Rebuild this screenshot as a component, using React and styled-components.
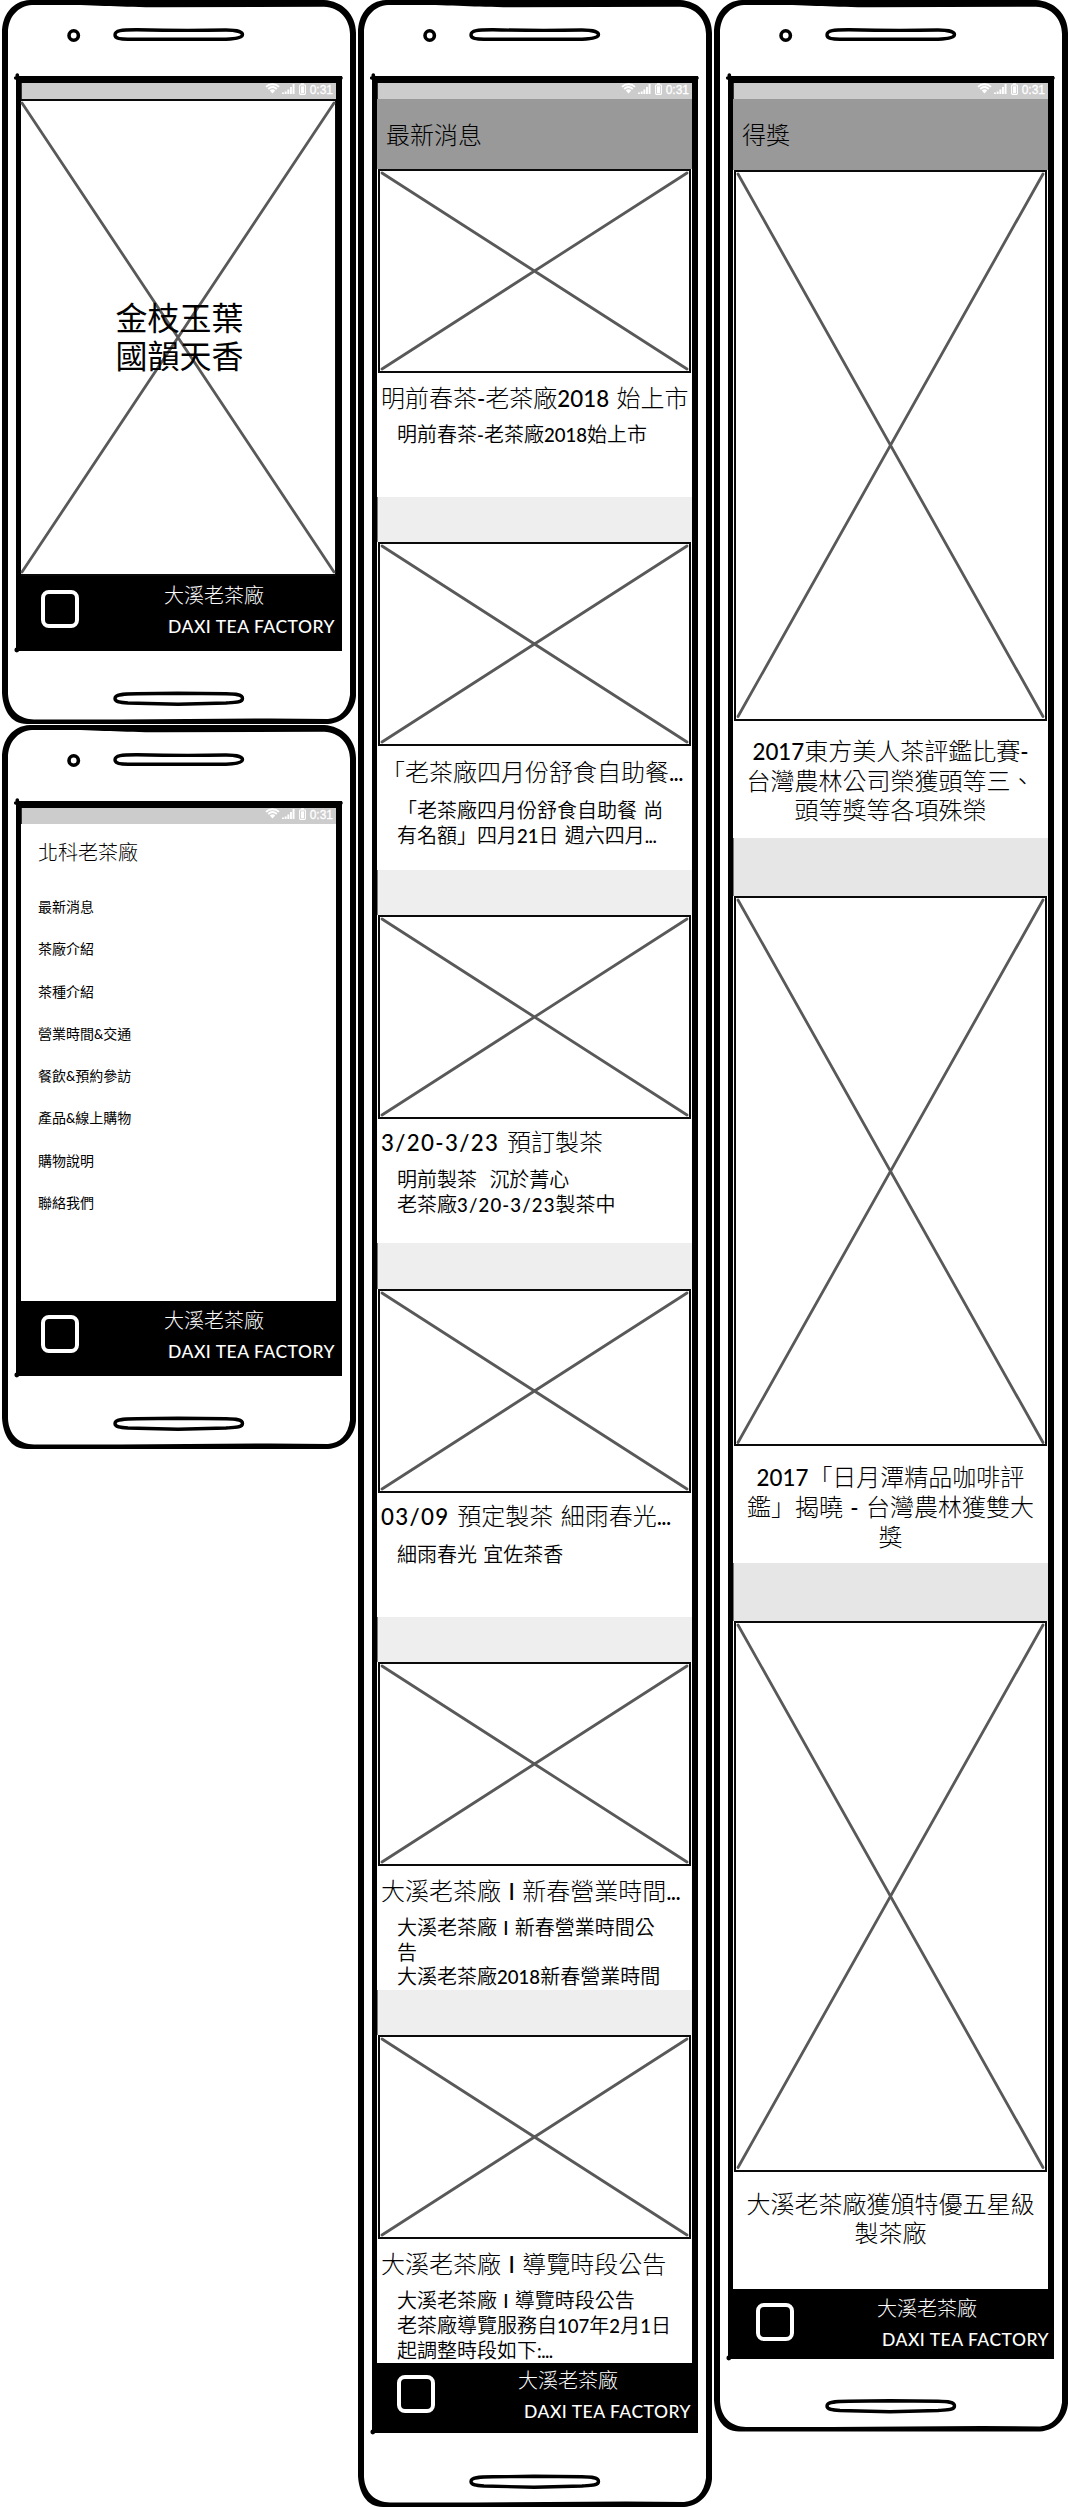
import React from "react";
import styled, { createGlobalStyle } from "styled-components";

const GlobalStyle = createGlobalStyle`
  *, *::before, *::after { box-sizing: border-box; }
  body {
    margin: 0;
    background: #fff;
    color: #000;
    font-family: Lato, "Noto Sans CJK TC", sans-serif;
    font-weight: 300;
  }
`;

const Board = styled.main`
  display: flex;
  align-items: flex-start;
  width: 1068px;
  height: 2507px;
  overflow: hidden;
`;

const Column = styled.div`
  display: flex;
  flex-direction: column;
  gap: 1px;
  width: 356px;
  flex: none;
`;

const PhoneShell = styled.section`
  display: flex;
  flex-direction: column;
  width: 356px;
`;

const BezelArt = styled.svg`
  display: block;
  flex: none;
  overflow: visible;
`;

const Sides = styled.div`
  margin-left: 2px;
  padding: 0 8px;
  border: solid #000;
  border-width: 0 6px;
`;

const Screen = styled.div`
  display: flex;
  flex-direction: column;
  height: ${(p) => p.$height}px;
  border: solid #000;
  border-width: 7px 6px 0 5px;
  background: #fff;
`;

const StatusRow = styled.div`
  display: flex;
  flex: none;
  justify-content: flex-end;
  align-items: flex-start;
  height: 16px;
  padding-right: 3px;
  border-left: 1px solid #333;
  background: #ccc;
  color: #fff;
  font: 400 12px/14px "Liberation Sans", sans-serif;
  -webkit-text-stroke: 0.3px #fff;
`;

const StatusIcons = styled.svg`
  display: block;
  margin-right: 3px;
`;

const Content = styled.div`
  display: flex;
  flex-direction: column;
  flex: 1;
  min-height: 0;
`;

const Picture = styled.div`
  position: relative;
  flex: none;
  height: ${(p) => p.$height}px;
  margin: ${(p) => (p.$flush ? "0" : "0 1px")};
  padding: 2px ${(p) => (p.$flush ? 1 : 2)}px;
  border: solid #0a0a0a;
  border-width: ${(p) => (p.$flush ? "2px 1px 2px 0" : "2px")};
  background: #fff;
`;

const CrossArt = styled.svg`
  display: block;
  width: 100%;
  height: 100%;
  overflow: visible;
`;

const Slogan = styled.div`
  position: absolute;
  inset: 198px 0 auto 3px;
  text-align: center;
  font-size: 32px;
  line-height: 38px;
  font-weight: 400;
`;

const Footer = styled.footer`
  display: flex;
  flex: none;
  align-items: flex-start;
  justify-content: space-between;
  height: ${(p) => p.$height}px;
  padding: ${(p) => p.$top}px 0 0 ${(p) => p.$left}px;
  background: #000;
  color: #fff;
`;

const HomeSquare = styled.div`
  width: 38px;
  height: 38px;
  border: 4px solid #fff;
  border-radius: 8px;
`;

const Brand = styled.div`
  display: flex;
  flex-direction: column;
  width: ${(p) => p.$width}px;
  margin-top: -7px;
`;

const BrandName = styled.div`
  font-size: 20px;
  line-height: 24px;
`;

const BrandLatin = styled.div`
  margin-top: 9px;
  padding-left: ${(p) => p.$indent}px;
  font-size: 17.5px;
  font-weight: 500;
  line-height: 22px;
  letter-spacing: 0.5px;
  white-space: nowrap;
`;

const Header = styled.header`
  flex: none;
  height: ${(p) => p.$height}px;
  padding: 21px 9px;
  background: #999;
  font-size: 24px;
  line-height: 30px;
`;

const MenuTitle = styled.h2`
  margin: 0;
  padding: 16px 17px 0;
  font-size: 20px;
  font-weight: 300;
  line-height: 24px;
`;

const MenuList = styled.ul`
  list-style: none;
  margin: 0;
  padding: 22px 17px 0;
`;

const MenuItem = styled.li`
  height: 42.25px;
  font-size: 14px;
  font-weight: 400;
  line-height: 42.25px;
`;

const Latin = styled.span`
  font-size: 0.93em;
  font-weight: 500;
  letter-spacing: ${(p) => p.$tracking}em;
  word-spacing: ${(p) => (p.$tracking > 0 ? 0.03 : 0.08)}em;
`;

const NewsText = styled.div`
  flex: none;
  height: 124px;
  overflow: hidden;
`;

const NewsTitle = styled.h3`
  height: ${(p) => 49 + p.$bodyShift}px;
  margin: 0;
  padding: ${(p) => 11 + p.$titleShift}px 0 0 4px;
  font-size: 24px;
  font-weight: 300;
  line-height: 28px;
  white-space: pre;
`;

const NewsLine = styled.p`
  margin: 0;
  padding-left: 20px;
  font-size: 20px;
  font-weight: 350;
  line-height: 24px;
  white-space: pre;
`;

const Divider = styled.div`
  flex: none;
  height: ${(p) => p.$height}px;
  border-left: 1px solid #777;
  background: ${(p) => p.$color};
`;

const AwardText = styled.div`
  flex: none;
  height: 117px;
  padding-top: ${(p) => p.$top}px;
  font-size: 24px;
  line-height: 29px;
  text-align: center;
  white-space: pre;
`;

function trackingFor(part) {
  if (part.includes("/")) return 0.06;
  if (part.includes("...")) return -0.03;
  return 0;
}

function Mixed({ text }) {
  return text
    .split(/([\x20-\x7e]+)/)
    .filter(Boolean)
    .map((part, i) =>
      /^[\x20-\x7e]/.test(part) ? (
        <Latin key={i} $tracking={trackingFor(part)}>{part}</Latin>
      ) : (
        part
      )
    );
}

function TopBezel() {
  return (
    <BezelArt width="356" height="76" viewBox="0 0 356 76">
      <path
        fillRule="evenodd"
        d="M2 76V33C2 15 12 1 30 0H324C342 1 356 14 356 33V76H350V34C350 20 340 7 324 6.7L160 7.3C120 7.3 100 5 60 5H32C18 6 8 17 8 33V76Z"
      />
      <ellipse cx="73.7" cy="35.5" rx="4.7" ry="4.7" fill="#fff" stroke="#000" strokeWidth="3.6" />
      <path
        d="M115 35C115 30 122 30 137 29.8C170 30.5 200 30.5 226 30C236 30 242.500 32 242.500 34.500C242.500 37.500 236 39 226 39.200H128C120 39.200 115 38.500 115 35Z"
        fill="#fff"
        stroke="#000"
        strokeWidth="3.4"
      />
      <path d="M17.300 75V78M15.700 78H341" stroke="#000" strokeWidth="3.6" strokeLinecap="round" />
    </BezelArt>
  );
}

function BottomBezel({ height }) {
  return (
    <BezelArt width="356" height={height} viewBox={`0 0 356 ${height}`}>
      <g transform={`translate(0 ${height - 73})`}>
        <path
          fillRule="evenodd"
          d="M2 -2V42C3 58 10 73 27 73H328C344 72 355 59 356 45V-2H350V44C348 59 340 67 328 68L270 67.500L120 68.500H34C20 68 9 60 8 43V-2Z"
        />
        <path
          d="M115 47.500C115 43.500 122 43 137 42.800L178 42.300L226 42.800C236 43 242.500 43.500 242.500 47.500C242.500 51.500 236 51.500 226 52L178 53.200L128 52C120 51.500 115 51 115 47.500Z"
          fill="#fff"
          stroke="#000"
          strokeWidth="3.4"
        />
      </g>
      <circle cx="16.800" cy="-1" r="2.400" />
    </BezelArt>
  );
}

function StatusBar() {
  return (
    <StatusRow>
      <StatusIcons width="42" height="14" viewBox="0 0 42 14">
        <g fill="none" stroke="#fff" strokeWidth="1.9">
          <path d="M1 3.800C4.500 0.300 10.500 0.300 14 3.800" />
          <path d="M3.200 6C5.800 3.500 9.200 3.500 11.800 6" />
        </g>
        <path d="M4.800 7.400C6.400 6 8.600 6 10.200 7.400L7.500 10.500Z" fill="#fff" />
        <path
          d="M17 9.500h1.900v1.500H17zM19.700 8.500h1.900V11h-1.900zM22.400 6.500h1.900V11h-1.900zM25 4h1.900v7H25zM27.600 1h1.900v10h-1.900z"
          fill="#fff"
        />
        <path d="M36 1h3" stroke="#fff" strokeWidth="1.400" />
        <rect x="34.600" y="2" width="5.800" height="9.400" rx="0.800" fill="none" stroke="#fff" strokeWidth="1.100" />
        <rect x="36" y="3.300" width="3" height="6.900" fill="#fff" />
      </StatusIcons>
      0:31
    </StatusRow>
  );
}

function CrossedPicture({ height, flush, children }) {
  return (
    <Picture $height={height} $flush={flush}>
      <CrossArt viewBox="0 0 100 100" preserveAspectRatio="none">
        <path
          d="M0 0L100 100M100 0L0 100"
          stroke="#595959"
          strokeWidth="2.8"
          strokeLinecap="round"
          vectorEffect="non-scaling-stroke"
        />
      </CrossArt>
      {children}
    </Picture>
  );
}

function PhoneFooter({ height = 75, top = 14, left = 20, brandWidth = 172, latinIndent = 4 }) {
  return (
    <Footer $height={height} $top={top} $left={left}>
      <HomeSquare />
      <Brand $width={brandWidth}>
        <BrandName>大溪老茶廠</BrandName>
        <BrandLatin $indent={latinIndent}>DAXI TEA FACTORY</BrandLatin>
      </Brand>
    </Footer>
  );
}

function Phone({ screen, bottom, footer, children }) {
  return (
    <PhoneShell>
      <TopBezel />
      <Sides>
        <Screen $height={screen}>
          <StatusBar />
          <Content>{children}</Content>
          <PhoneFooter {...footer} />
        </Screen>
      </Sides>
      <BottomBezel height={bottom} />
    </PhoneShell>
  );
}

const menu = [
  "最新消息",
  "茶廠介紹",
  "茶種介紹",
  "營業時間&交通",
  "餐飲&預約參訪",
  "產品&線上購物",
  "購物說明",
  "聯絡我們",
];

const news = [
  { title: "明前春茶-老茶廠2018 始上市", lines: ["明前春茶-老茶廠2018始上市"] },
  {
    title: "「老茶廠四月份舒食自助餐...",
    titleShift: 1,
    bodyShift: 3,
    lines: ["「老茶廠四月份舒食自助餐 尚", "有名額」四月21日 週六四月..."],
  },
  {
    title: "3/20-3/23 預訂製茶",
    titleShift: -2,
    bodyShift: -1,
    lines: ["明前製茶  沉於菁心", "老茶廠3/20-3/23製茶中"],
  },
  { title: "03/09 預定製茶 細雨春光...", titleShift: -2, lines: ["細雨春光 宜佐茶香"] },
  {
    title: "大溪老茶廠 I 新春營業時間...",
    lines: ["大溪老茶廠 I 新春營業時間公", "告", "大溪老茶廠2018新春營業時間"],
  },
  {
    title: "大溪老茶廠 I 導覽時段公告",
    lines: ["大溪老茶廠 I 導覽時段公告", "老茶廠導覽服務自107年2月1日", "起調整時段如下:..."],
  },
];

const awards = [
  { top: 15, lines: ["2017東方美人茶評鑑比賽-", "台灣農林公司榮獲頭等三、", "頭等獎等各項殊榮"] },
  { top: 16, lines: ["2017「日月潭精品咖啡評", "鑑」揭曉 - 台灣農林獲雙大", "獎"] },
  { top: 17, lines: ["大溪老茶廠獲頒特優五星級", "製茶廠"] },
];

export default function App() {
  return (
    <>
      <GlobalStyle />
      <Board>
        <Column>
          <Phone screen={575} bottom={73}>
            <CrossedPicture height={477} flush>
              <Slogan>
                金枝玉葉
                <br />
                國韻天香
              </Slogan>
            </CrossedPicture>
          </Phone>
          <Phone screen={575} bottom={73}>
            <MenuTitle>北科老茶廠</MenuTitle>
            <MenuList>
              {menu.map((label) => (
                <MenuItem key={label}>
                  <Mixed text={label} />
                </MenuItem>
              ))}
            </MenuList>
          </Phone>
        </Column>
        <Column>
          <Phone screen={2356.5} bottom={74} footer={{ height: 69.5, top: 12, brandWidth: 174, latinIndent: 6 }}>
            <Header $height={70.2}>最新消息</Header>
            {news.map((item, i) => (
              <React.Fragment key={item.title}>
                <CrossedPicture height={204} />
                <NewsText>
                  <NewsTitle $titleShift={item.titleShift || 0} $bodyShift={item.bodyShift || 0}>
                    <Mixed text={item.title} />
                  </NewsTitle>
                  {item.lines.map((line) => (
                    <NewsLine key={line}>
                      <Mixed text={line} />
                    </NewsLine>
                  ))}
                </NewsText>
                {i < news.length - 1 && <Divider $height={45.15} $color="#eee" />}
              </React.Fragment>
            ))}
          </Phone>
        </Column>
        <Column>
          <Phone screen={2283} bottom={72.5} footer={{ height: 70, top: 14, left: 23, brandWidth: 171, latinIndent: 5 }}>
            <Header $height={71.4}>得獎</Header>
            {awards.map((item, i) => (
              <React.Fragment key={item.lines[0]}>
                <CrossedPicture height={550.5} />
                <AwardText $top={item.top}>
                  {item.lines.map((line) => (
                    <div key={line}>
                      <Mixed text={line} />
                    </div>
                  ))}
                </AwardText>
                {i < awards.length - 1 && <Divider $height={58} $color="#e6e6e6" />}
              </React.Fragment>
            ))}
          </Phone>
        </Column>
      </Board>
    </>
  );
}
